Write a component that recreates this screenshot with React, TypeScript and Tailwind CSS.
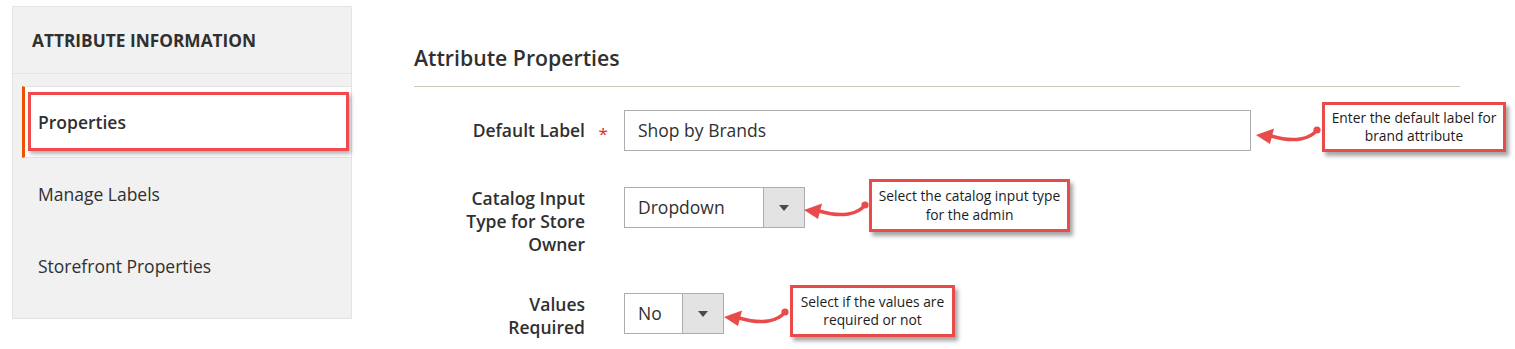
import type { ReactNode } from "react";

function CurvedArrow({ className }: { className: string }) {
  return (
    <svg width="68" height="26" viewBox="0 0 68 26" className={className}>
      <path d="M62 8 C 55 17, 40 21, 16 14" fill="none" stroke="#e94b4b" strokeWidth="3.5" strokeLinecap="round" />
      <polygon points="1,13 19,6.5 15,22" fill="#e94b4b" />
      <circle cx="62" cy="8" r="3.6" fill="#e94b4b" />
    </svg>
  );
}

function Callout({ className, children }: { className: string; children: ReactNode }) {
  return (
    <div
      className={`absolute flex flex-col items-center justify-center border-[3px] border-[#e94b4b] bg-white text-center text-[13.8px] leading-[18.5px] text-[#1c1c1c] shadow-[3px_4px_4px_rgba(0,0,0,0.35)] ${className}`}
    >
      {children}
    </div>
  );
}

function SelectBox({ className, value }: { className: string; value: string }) {
  return (
    <div className={`flex h-[41px] border border-[#adadad] bg-white ${className}`}>
      <div className="flex flex-1 items-center pl-[13px] text-[17.5px]">{value}</div>
      <div className="flex w-[41px] items-center justify-center border-l border-[#adadad] bg-[#e3e3e3]">
        <svg width="10" height="6" viewBox="0 0 10 6">
          <polygon points="0,0 10,0 5,6" fill="#514943" />
        </svg>
      </div>
    </div>
  );
}

export default function App() {
  return (
    <div className="flex min-h-[349px] items-start bg-white pl-[12px] pt-[6px] font-['Open_Sans',sans-serif] text-[#303030]">
      <aside className="w-[340px] border border-[#e3e3e3] bg-[#f1f1f1] pb-[16px]">
        <h2 className="border-b border-[#e3e3e3] px-[19px] py-[21.5px] text-[17.3px] font-bold uppercase leading-[23px]">
          Attribute Information
        </h2>
        <ul className="mt-[12px]">
          <li className="relative ml-[9px] flex h-[72px] items-center border-y border-l-[3px] border-y-[#e3e3e3] border-l-[#eb5202] bg-white pl-[13px] text-[17.5px] font-semibold leading-[23px]">
            Properties
            <span className="absolute bottom-[6px] left-[3px] right-[2px] top-[5px] border-[3px] border-[#f04a4d] shadow-[2px_3px_4px_rgba(0,0,0,0.3)]"></span>
          </li>
          <li className="ml-[9px] flex h-[72px] items-center border-l-[3px] border-transparent pl-[13px] text-[17.5px] leading-[23px]">
            Manage Labels
          </li>
          <li className="ml-[9px] flex h-[72px] items-center border-l-[3px] border-transparent pl-[13px] text-[17.5px] leading-[23px]">
            Storefront Properties
          </li>
        </ul>
      </aside>

      <main className="ml-[62px] w-[1046px] pt-[38px]">
        <h1 className="border-b border-[#cdc7bd] pb-[14px] text-[21.25px] font-semibold leading-[28px]">
          Attribute Properties
        </h1>

        <div className="mt-[23px] flex flex-col">
          <div className="relative flex items-start">
            <label className="w-[171px] pt-[8.5px] text-right text-[17.5px] font-semibold leading-[23px]">
              Default Label
            </label>
            <span className="w-[39px] pl-[13.5px] pt-[12px] text-[17px] leading-[23px] text-[#e22626]">*</span>
            <div className="flex h-[41px] w-[627px] items-center border border-[#adadad] bg-white pl-[13px] text-[17.5px]">
              Shop by Brands
            </div>
            <CurvedArrow className="absolute left-[841px] top-[12px]" />
            <Callout className="left-[908px] top-[-8px] h-[50px] w-[184px]">
              <span>Enter the default label for</span>
              <span>brand attribute</span>
            </Callout>
          </div>

          <div className="relative mt-[36px] flex items-start">
            <label className="w-[171px] text-right text-[17.5px] font-semibold leading-[23px]">
              Catalog Input
              <br />
              Type for Store
              <br />
              Owner
            </label>
            <span className="w-[39px]"></span>
            <SelectBox className="w-[181px]" value="Dropdown" />
            <CurvedArrow className="absolute left-[389px] top-[10px]" />
            <Callout className="left-[455px] top-[-8px] h-[53px] w-[201px]">
              <span>Select the catalog input type</span>
              <span>for the admin</span>
            </Callout>
          </div>

          <div className="relative mt-[37px] flex items-start">
            <label className="w-[171px] text-right text-[17.5px] font-semibold leading-[23px]">
              Values
              <br />
              Required
            </label>
            <span className="w-[39px]"></span>
            <SelectBox className="w-[100px]" value="No" />
            <CurvedArrow className="absolute left-[309px] top-[11px]" />
            <Callout className="left-[376px] top-[-8px] h-[52px] w-[165px]">
              <span>Select if the values are</span>
              <span>required or not</span>
            </Callout>
          </div>
        </div>
      </main>
    </div>
  );
}
